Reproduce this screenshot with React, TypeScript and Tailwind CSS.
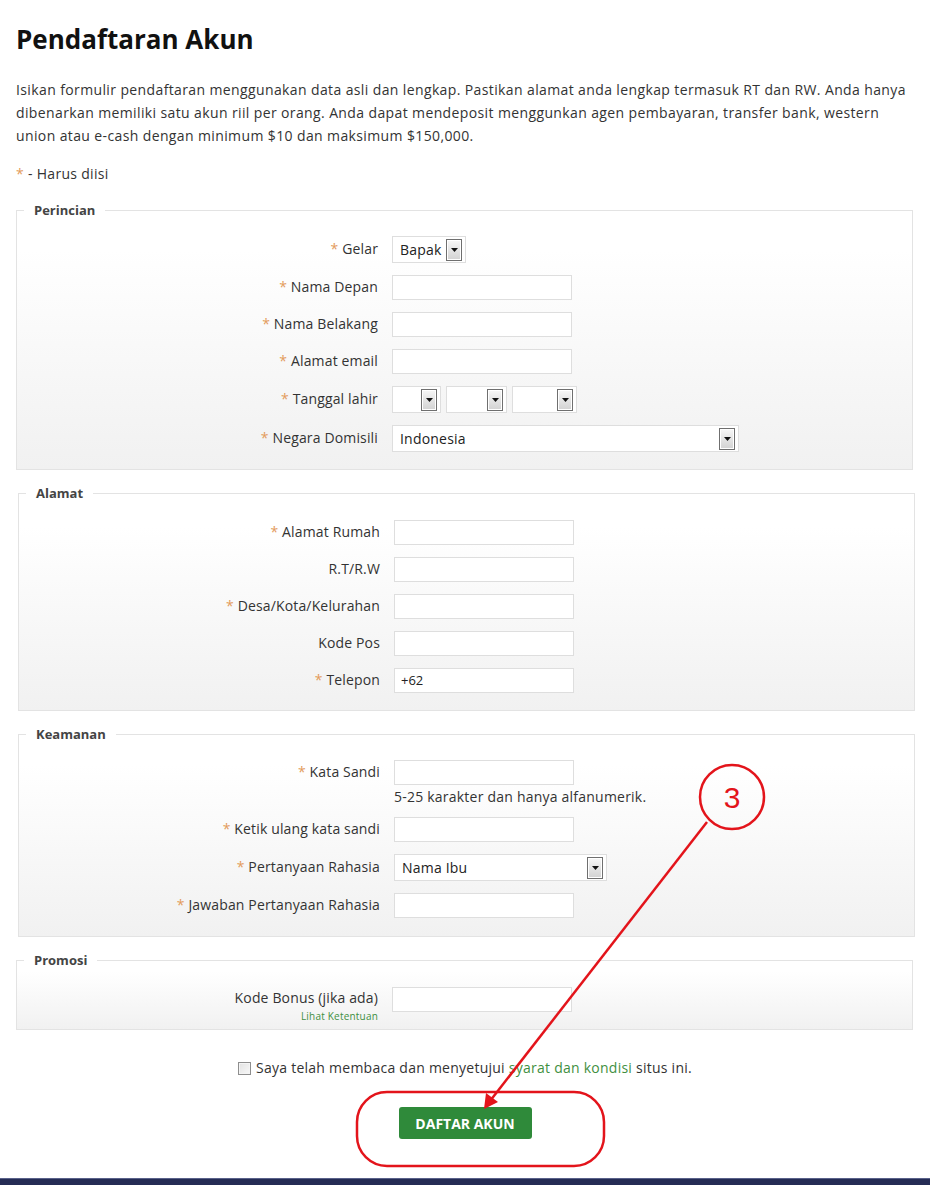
import React from "react";

const Star = () => <span className="text-[#e39b5c]">* </span>;

function Arrow() {
  return (
    <span className="flex h-[22px] w-[16px] items-center justify-center border border-[#6f6f6f] bg-linear-to-b from-[#f7f7f7] to-[#d2d2d2] shadow-[inset_0_0_0_1px_#ffffff]">
      <svg width="7" height="4" viewBox="0 0 7 4">
        <path d="M0 0 H7 L3.5 4 Z" fill="#111" />
      </svg>
    </span>
  );
}

function Select({ w, text }: { w: string; text?: string }) {
  return (
    <div
      className={`flex h-[27px] ${w} items-center justify-between border border-[#dedede] bg-white pl-[7px] pr-[3px] text-[14px] tracking-[0.2px] text-[#222]`}
    >
      <span>{text ?? ""}</span>
      <Arrow />
    </div>
  );
}

function Input({ value, w = "w-[180px]" }: { value?: string; w?: string }) {
  return (
    <div
      className={`flex h-[25px] ${w} items-center border border-[#dedede] bg-white pl-[6px] text-[13px] text-[#222]`}
    >
      {value ?? ""}
    </div>
  );
}

function Row({
  label,
  req,
  children,
}: {
  label: string;
  req?: boolean;
  children: React.ReactNode;
}) {
  return (
    <div className="flex items-center">
      <div className="w-[361px] pb-[2px] text-right text-[14px] leading-[20px] tracking-[0.15px] text-[#333]">
        {req && <Star />}
        {label}
      </div>
      <div className="ml-[14px] flex gap-[5px]">{children}</div>
    </div>
  );
}

function Box({
  title,
  className,
  children,
}: {
  title: string;
  className: string;
  children: React.ReactNode;
}) {
  return (
    <fieldset
      className={`w-[897px] border border-[#e3e3e3] bg-linear-to-b from-white from-[15%] to-[#f1f1f1] ${className}`}
    >
      <legend className="ml-[7px] px-[10px] text-[13px] font-bold leading-[20px] text-[#444]">
        {title}
      </legend>
      {children}
    </fieldset>
  );
}

export default function App() {
  return (
    <div
      className="relative w-[930px] bg-white text-[#333]"
      style={{ fontFamily: '"Open Sans", "Liberation Sans", sans-serif' }}
    >
      <div className="px-[16px]">
        <h1 className="pt-[24px] text-[26px] font-bold leading-[31px] text-[#111]">
          Pendaftaran Akun
        </h1>
        <p className="mt-[23px] text-[14px] leading-[23px] tracking-[0.38px] text-[#333]">
          Isikan formulir pendaftaran menggunakan data asli dan lengkap. Pastikan alamat anda lengkap termasuk RT dan RW. Anda hanya
          <br />
          dibenarkan memiliki satu akun riil per orang. Anda dapat mendeposit menggunkan agen pembayaran, transfer bank, western
          <br />
          union atau e-cash dengan minimum $10 dan maksimum $150,000.
        </p>
        <p className="mt-[15px] text-[14px] leading-[23px] tracking-[0.3px] text-[#333]">
          <Star />- Harus diisi
        </p>

        <Box title="Perincian" className="mt-[15px] pt-[16px] pb-[17px]">
          <div className="flex flex-col gap-[12px]">
            <Row label="Gelar" req>
              <Select w="w-[74px]" text="Bapak" />
            </Row>
            <Row label="Nama Depan" req>
              <Input />
            </Row>
            <Row label="Nama Belakang" req>
              <Input />
            </Row>
            <Row label="Alamat email" req>
              <Input />
            </Row>
            <Row label="Tanggal lahir" req>
              <Select w="w-[49px]" />
              <Select w="w-[61px]" />
              <Select w="w-[65px]" />
            </Row>
            <Row label="Negara Domisili" req>
              <Select w="w-[347px]" text="Indonesia" />
            </Row>
          </div>
        </Box>

        <Box title="Alamat" className="ml-[2px] mt-[13px] pt-[17px] pb-[17px]">
          <div className="flex flex-col gap-[12px]">
            <Row label="Alamat Rumah" req>
              <Input />
            </Row>
            <Row label="R.T/R.W">
              <Input />
            </Row>
            <Row label="Desa/Kota/Kelurahan" req>
              <Input />
            </Row>
            <Row label="Kode Pos">
              <Input />
            </Row>
            <Row label="Telepon" req>
              <Input value="+62" />
            </Row>
          </div>
        </Box>

        <Box title="Keamanan" className="ml-[2px] mt-[13px] pt-[16px] pb-[18px]">
          <div className="flex flex-col">
            <Row label="Kata Sandi" req>
              <Input />
            </Row>
            <div className="ml-[375px] mt-[2px] text-[14px] leading-[20px] tracking-[0.22px] text-[#333]">
              5-25 karakter dan hanya alfanumerik.
            </div>
            <div className="mt-[10px]">
              <Row label="Ketik ulang kata sandi" req>
                <Input />
              </Row>
            </div>
            <div className="mt-[12px]">
              <Row label="Pertanyaan Rahasia" req>
                <Select w="w-[213px]" text="Nama Ibu" />
              </Row>
            </div>
            <div className="mt-[12px]">
              <Row label="Jawaban Pertanyaan Rahasia" req>
                <Input />
              </Row>
            </div>
          </div>
        </Box>

        <Box title="Promosi" className="mt-[13px] pt-[17px] pb-[7px]">
          <div className="flex items-start">
            <div className="flex w-[361px] flex-col items-end">
              <div className="mt-[1px] text-[14px] leading-[20px] tracking-[0.15px] text-[#333]">
                Kode Bonus (jika ada)
              </div>
              <div className="mt-[2px] text-[10px] leading-[12px] tracking-[0.2px] text-[#3f8f3f]">
                Lihat Ketentuan
              </div>
            </div>
            <div className="ml-[14px]">
              <Input />
            </div>
          </div>
        </Box>

        <div className="mt-[28px] flex items-center justify-center text-[14px] leading-[20px] tracking-[0.25px] text-[#333]">
          <span className="mr-[5px] inline-block h-[13px] w-[13px] border border-[#8e8e8e] bg-linear-to-br from-[#e2e2e2] to-[#f8f8f8] shadow-[inset_0_0_0_1px_#f4f4f4]" />
          <span>
            Saya telah membaca dan menyetujui{" "}
            <span className="text-[#3f8f3f]">syarat dan kondisi</span> situs ini.
          </span>
        </div>

        <div className="mt-[29px] flex justify-center">
          <button className="h-[32px] w-[133px] rounded-[3px] bg-[#2f8a3a] text-[14px] font-bold text-white">
            DAFTAR AKUN
          </button>
        </div>
      </div>

      <div className="mt-[39px] h-[8px] border-t border-[#59618a] bg-[#252c55]" />

      <svg
        className="pointer-events-none absolute left-0 top-0"
        width="930"
        height="1185"
        viewBox="0 0 930 1185"
      >
        <circle cx="732" cy="797" r="32" fill="none" stroke="#e3141b" strokeWidth="2.5" />
        <text
          x="732"
          y="808"
          textAnchor="middle"
          fontSize="30"
          fill="#e3141b"
          fontFamily="Liberation Sans, Arial, sans-serif"
        >
          3
        </text>
        <line x1="707" y1="822" x2="490" y2="1101" stroke="#e3141b" strokeWidth="2.5" />
        <path d="M484 1109 L486 1093 L498 1102 Z" fill="#e3141b" />
        <rect x="357" y="1092" width="247" height="74" rx="30" ry="30" fill="none" stroke="#e3141b" strokeWidth="2.5" />
      </svg>
    </div>
  );
}
